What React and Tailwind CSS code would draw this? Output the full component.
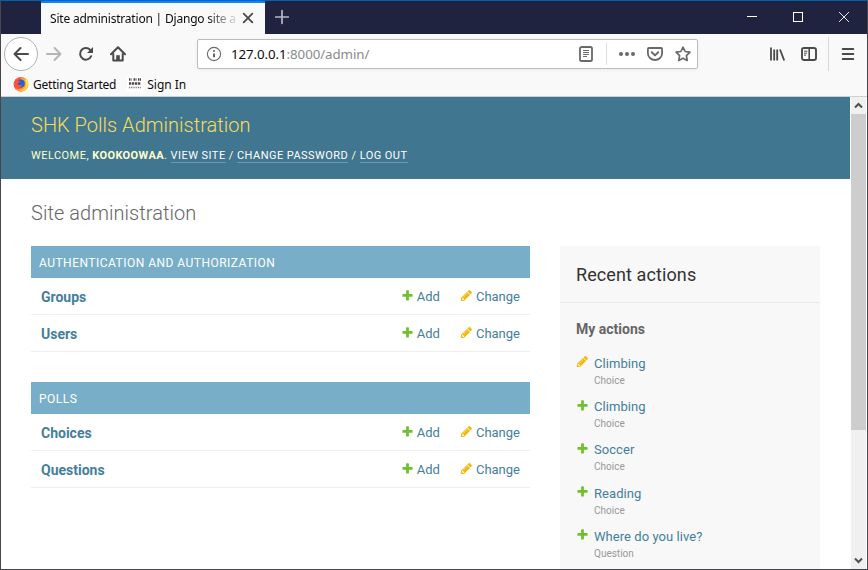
import React from "react";

const apps = [
  { name: "Authentication and Authorization", models: ["Groups", "Users"] },
  { name: "Polls", models: ["Choices", "Questions"] },
];

const actions = [
  { kind: "change", title: "Climbing", type: "Choice" },
  { kind: "add", title: "Climbing", type: "Choice" },
  { kind: "add", title: "Soccer", type: "Choice" },
  { kind: "add", title: "Reading", type: "Choice" },
  { kind: "add", title: "Where do you live?", type: "Question" },
];

function ActionIcon({ kind, className = "" }) {
  return (
    <svg viewBox="0 0 1792 1792" className={`size-[13px] shrink-0 ${className}`}>
      {kind === "add" ? (
        <path
          fill="#70bf2b"
          d="M1600 796v192q0 40-28 68t-68 28h-416v416q0 40-28 68t-68 28h-192q-40 0-68-28t-28-68v-416h-416q-40 0-68-28t-28-68v-192q0-40 28-68t68-28h416v-416q0-40 28-68t68-28h192q40 0 68 28t28 68v416h416q40 0 68 28t28 68z"
        />
      ) : (
        <path
          fill="#efb80b"
          d="M491 1536l91-91-235-235-91 91v107h128v128h107zm523-928q0-22-22-22-10 0-17 7l-542 542q-7 7-7 17 0 22 22 22 10 0 17-7l542-542q7-7 7-17zm-54-192l416 416-832 832h-416v-416zm683 96q0 53-37 90l-166 166-416-416 166-165q36-38 90-38 53 0 91 38l235 234q37 39 37 91z"
        />
      )}
    </svg>
  );
}

function Icon({ children, className = "" }) {
  return (
    <svg
      viewBox="0 0 16 16"
      fill="none"
      stroke="currentColor"
      strokeWidth="2"
      strokeLinecap="round"
      strokeLinejoin="round"
      className={`size-4 shrink-0 ${className}`}
    >
      {children}
    </svg>
  );
}

function TabBar() {
  return (
    <div className="flex h-[33px] bg-[#202340]">
      <div className="w-10" />
      <div className="flex h-full w-[224px] items-center border-t-2 border-[#0a84ff] bg-[#f9f9fa] pl-[9px]">
        <span className="w-[190px] shrink-0 whitespace-nowrap bg-linear-to-r from-[#0c0c0d] from-82% to-transparent to-100% bg-clip-text text-[12px] tracking-[-0.2px] text-transparent">
          Site administration | Django site a
        </span>
        <Icon className="mb-px text-[#4a4a4d]">
          <path d="M3.7 3.7l8.6 8.6M12.3 3.7l-8.6 8.6" strokeWidth="1.8" />
        </Icon>
      </div>
      <Icon className="ml-[9px] mt-2 text-[#b8b9c4]">
        <path d="M8 1.7v12.6M1.7 8h12.6" strokeWidth="1.7" />
      </Icon>
      <div className="ml-auto flex items-start pt-[11px] text-white">
        <svg viewBox="0 0 10 10" className="mr-9 size-[10px]" shapeRendering="crispEdges">
          <path d="M0 4.5h10" stroke="currentColor" />
        </svg>
        <svg viewBox="0 0 10 10" className="mr-9 size-[10px]" shapeRendering="crispEdges">
          <path d="M.5 .5h9v9h-9z" fill="none" stroke="currentColor" />
        </svg>
        <svg viewBox="0 0 10 10" className="mr-[18px] size-[10px]">
          <path d="M0 0l10 10M10 0L0 10" stroke="currentColor" strokeWidth=".9" />
        </svg>
      </div>
    </div>
  );
}

function Toolbar() {
  return (
    <div className="flex h-10 items-center text-[#4a4a4b]">
      <div className="ml-[3px] flex size-[34px] items-center justify-center rounded-full border border-[#b1b1b3] bg-white">
        <Icon>
          <path d="M15 8H1.5M7.5 2L1.5 8l6 6" />
        </Icon>
      </div>
      <Icon className="ml-[8px] text-[#b5b5b6]">
        <path d="M1 8h13.5M8.5 2l6 6-6 6" />
      </Icon>
      <Icon className="ml-[16px]">
        <path d="M13.2 10.2A5.8 5.8 0 1 1 12.6 4.4" />
        <path d="M15 1v6H9z" fill="currentColor" stroke="none" />
      </Icon>
      <Icon className="ml-[16px]">
        <path d="M1 8.2L8 1.3l7 6.9M3.3 8v6.6h9.4V8" />
        <path d="M6.2 9.2h3.6v5H6.2z" fill="currentColor" stroke="none" />
      </Icon>
      <div className="ml-[71px] flex h-[30px] w-[501px] items-center rounded-xs border border-[#bcbcbd] bg-white text-[#69696a] shadow-[0_1px_4px_rgba(0,0,0,0.05)]">
        <Icon className="ml-2">
          <circle cx="8" cy="8" r="6.6" strokeWidth="1.1" />
          <path d="M8 7.5v3.8" strokeLinecap="butt" />
          <circle cx="8" cy="5" r="1.1" fill="currentColor" stroke="none" />
        </Icon>
        <span className="ml-[9px] pt-[2px] text-[13.3px] tracking-[-0.08px] text-[#8a8a8b]">
          <span className="text-[#0c0c0d]">127.0.0.1</span>:8000/admin/
        </span>
        <Icon className="ml-auto">
          <rect x="2" y="1" width="12" height="14" rx="1.6" strokeWidth="1.8" />
          <path d="M5 4.5h6M5 6.5h6M5 8.5h6M5 10.5h4" strokeWidth="1" strokeLinecap="butt" />
        </Icon>
        <div className="ml-3 h-[22px] w-px bg-[#e0e0e1]" />
        <Icon className="ml-3">
          <g fill="currentColor" stroke="none">
            <circle cx="2" cy="8" r="2" />
            <circle cx="8" cy="8" r="2" />
            <circle cx="14" cy="8" r="2" />
          </g>
        </Icon>
        <Icon className="ml-3">
          <path d="M1.9 2h12.2q1 0 1 1v4.2a7.1 6.8 0 0 1-14.2 0V3q0-1 1-1z" strokeWidth="1.8" />
          <path d="M4.8 6.3L8 9.4l3.2-3.1" />
        </Icon>
        <Icon className="ml-3 mr-[6px]">
          <path d="M8 1.2l2.1 4.3 4.8.7-3.5 3.4.8 4.9L8 12.2l-4.2 2.3.8-4.9L1.1 6.2l4.8-.7z" strokeWidth="1.7" />
        </Icon>
      </div>
      <Icon className="ml-[71px]">
        <path d="M2 1.5v13M5.2 3.5v11M8.2 3.5v11M11 3.5l4.2 11" strokeWidth="1.8" strokeLinecap="butt" />
      </Icon>
      <Icon className="ml-4">
        <rect x="1" y="2" width="14" height="12" rx="2" strokeWidth="1.9" />
        <path d="M8.2 2v12" strokeWidth="1.6" />
        <path d="M3 5.2h3.4M3 7.2h3M3 9.2h2" strokeWidth="1" strokeLinecap="butt" />
      </Icon>
      <div className="ml-[11px] h-[34px] w-px bg-[#d7d7db]" />
      <Icon className="ml-[11px]">
        <path d="M2.7 3h10.6M2.7 8h10.6M2.7 13h10.6" strokeWidth="1.9" />
      </Icon>
    </div>
  );
}

function Bookmarks() {
  return (
    <div className="flex h-[23px] items-center border-b border-[#cfcfd0] pl-3 text-[12px] text-[#0c0c0d]">
      <svg viewBox="0 0 16 16" className="mb-[2px] size-4">
        <circle cx="7.8" cy="8.3" r="7.2" fill="#ff4f3f" />
        <path d="M8 1.2c4 0 7.5 2.6 7.4 7.2-.1 4-3.4 7.1-7.4 7.1-2.5 0-4.6-1.1-6-3 4 1.2 7.8.3 8.8-3.2.6-2.6-1-4-2.3-5.2C7.7 3.3 7.5 2 8 1.2z" fill="#ffa02e" />
        <path d="M14 3.6c1.7 3 1.5 6.8-.7 9.1-2 2-4.600 2.600-7 1.800 4 0 6.700-2.500 6.600-6 0-2-.5-3.300-1.400-4.900z" fill="#ffde3b" />
        <circle cx="7.8" cy="7.6" r="4" fill="#2463cd" />
        <path d="M2.6 3l1.8 1.7 2.4.2-.5 1.500-1.800.8c.4 2.400 3.300 2.800 5 1.200-.5 2.800-4.600 4-6.700 1.500C1.500 8 1.600 5 2.600 3z" fill="#ff5139" />
      </svg>
      <span className="ml-1 tracking-[-0.2px]">Getting Started</span>
      <svg viewBox="0 0 16 16" className="mb-[2px] ml-[11px] size-4">
        <rect width="16" height="16" rx="2" fill="#fff" />
        <g stroke="#4d4548" fill="none">
          <path d="M2 3.5h2.5M6.5 3.5h3M11 3.5h3" strokeWidth="2.4" strokeDasharray="1.5 .5" />
          <path d="M2 7.5h12" strokeWidth="2.6" strokeDasharray="2.3 .7" />
          <path d="M2 11.5h12" strokeWidth="1.6" strokeDasharray="1 .8" opacity=".75" />
        </g>
      </svg>
      <span className="ml-1 tracking-[-0.02px]">Sign In</span>
    </div>
  );
}

function ModelRow({ name }) {
  return (
    <div className="flex h-[37px] items-center border-b border-[#eee] px-[10px] text-[13px] text-[#447e9b]">
      <span className="pt-[2px] text-[14px] font-bold">{name}</span>
      <ActionIcon kind="add" className="mb-[2px] ml-auto" />
      <span className="ml-[3px] pt-[2px]">Add</span>
      <ActionIcon kind="change" className="mb-[2px] ml-5" />
      <span className="ml-[3px] pt-[2px]">Change</span>
    </div>
  );
}

function Header() {
  const link = "border-b border-white/25 text-white";
  return (
    <header className="h-[82px] shrink-0 bg-[#417690] px-[30px] pt-[13px] text-[#ffc]">
      <h1 className="text-[20px] font-light leading-[30px] tracking-[0.02px] text-[#f5dd5d]">
        SHK Polls Administration
      </h1>
      <div className="mt-[10px] flex whitespace-pre text-[11px] uppercase leading-[12px] tracking-[0.46px]">
        <span>Welcome, </span>
        <strong className="font-bold tracking-[0.4px]">kookoowaa</strong>
        <span>. </span>
        <a className={link}>View site</a>
        <span> / </span>
        <a className={link}>Change password</a>
        <span> / </span>
        <a className={link}>Log out</a>
      </div>
    </header>
  );
}

function Scrollbar() {
  return (
    <div className="ml-px flex w-[15px] flex-col bg-[#f0f0f0] text-[#505050]">
      <svg viewBox="0 0 15 17" className="h-[17px] w-[15px]">
        <path d="M4 10.5l3.5-3.5 3.5 3.5" fill="none" stroke="currentColor" strokeWidth="2" />
      </svg>
      <div className="h-[316px] bg-[#cdcdcd]" />
      <svg viewBox="0 0 15 17" className="mt-auto h-[17px] w-[15px]">
        <path d="M4 6.5l3.5 3.5 3.5-3.5" fill="none" stroke="currentColor" strokeWidth="2" />
      </svg>
    </div>
  );
}

export default function App() {
  return (
    <div className="flex h-[570px] w-[868px] flex-col overflow-hidden border border-[#47474b] border-t-[#0063b1] bg-[#f9f9fa] font-['Noto_Sans',sans-serif]">
      <TabBar />
      <Toolbar />
      <Bookmarks />
      <div className="flex h-[472px] bg-white">
        <div className="flex w-[849px] flex-col overflow-hidden font-[Roboto,sans-serif]">
          <Header />
          <main className="px-[30px] pt-[20px]">
            <h1 className="h-[47px] text-[20px] font-light leading-[28px] tracking-[0.05px] text-[#666]">
              Site administration
            </h1>
            <div className="flex items-start gap-[30px]">
              <div className="flex w-[499px] flex-col gap-[30px]">
                {apps.map((app) => (
                  <section key={app.name}>
                    <h2 className="flex h-8 items-center bg-[#79aec8] pl-2 pt-px text-[12px] uppercase tracking-[0.48px] text-white">
                      {app.name}
                    </h2>
                    {app.models.map((name) => (
                      <ModelRow key={name} name={name} />
                    ))}
                  </section>
                ))}
              </div>
              <aside className="h-[323px] w-[260px] bg-[#f8f8f8]">
                <h2 className="flex h-[57px] items-center border-b border-[#eaeaea] px-4 text-[18px] tracking-[0.1px] text-[#333]">
                  Recent actions
                </h2>
                <h3 className="px-4 pt-[17px] text-[14px] font-bold leading-[18px] text-[#666]">My actions</h3>
                <ul className="px-4 pt-[16px]">
                  {actions.map((a, i) => (
                    <li key={i} className="flex h-[43.2px]">
                      <ActionIcon kind={a.kind} className={a.kind === "add" ? "mt-[1.6px]" : "mt-px"} />
                      <div className="ml-[5px]">
                        <div className="text-[13px] leading-[20px] tracking-[0.06px] text-[#447e9b]">{a.title}</div>
                        <div className="text-[10px] leading-[14px] text-[#999]">{a.type}</div>
                      </div>
                    </li>
                  ))}
                </ul>
              </aside>
            </div>
          </main>
        </div>
        <Scrollbar />
      </div>
    </div>
  );
}
